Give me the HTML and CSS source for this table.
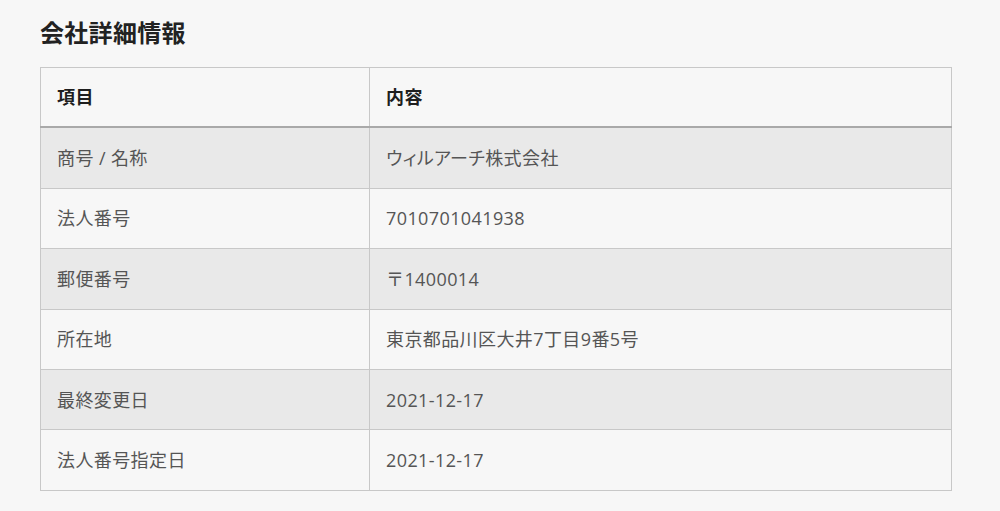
FILE: index.html
```html
<!DOCTYPE html>
<html lang="ja">
<head>
<meta charset="utf-8">
<link rel="stylesheet" href="styles.css">
</head>
<body>
<main class="page">
  <h2 class="title">会社詳細情報</h2>
  <table class="info">
    <thead>
      <tr><th class="col-key">項目</th><th>内容</th></tr>
    </thead>
    <tbody>
      <tr><td>商号 / 名称</td><td class="prop">ウィルアーチ株式会社</td></tr>
      <tr><td>法人番号</td><td>7010701041938</td></tr>
      <tr><td>郵便番号</td><td>〒1400014</td></tr>
      <tr><td>所在地</td><td>東京都品川区大井7丁目9番5号</td></tr>
      <tr><td>最終変更日</td><td>2021-12-17</td></tr>
      <tr><td>法人番号指定日</td><td>2021-12-17</td></tr>
    </tbody>
  </table>
</main>
</body>
</html>
```
FILE: styles.css
```css
html, body {
  margin: 0;
  padding: 0;
  background: #f7f7f7;
}
body {
  font-family: "Open Sans", "Noto Sans CJK JP", sans-serif;
  color: #333;
}
.page {
  padding: 15px 48px 0 40px;
}
.title {
  margin: 0 0 18px;
  font-family: "Noto Sans CJK JP", sans-serif;
  font-size: 24px;
  font-weight: 700;
  line-height: 34px;
  letter-spacing: 0.3px;
  color: #222;
}
.info {
  width: 912px;
  border-collapse: collapse;
  border: 1px solid #c4c4c4;
  font-size: 18px;
  letter-spacing: 0.4px;
}
.info th, .info td {
  text-align: left;
  padding: 0 16px;
  height: 59.4px;
  border: 1px solid #c8c8c8;
  line-height: 24px;
}
.info th {
  font-weight: 700;
  color: #1e1e1e;
  background: #f7f7f7;
  height: 58.4px;
  border-bottom: 2px solid #a9a9a9;
}
.info .col-key {
  width: 296px;
}
.info td {
  color: #555;
  font-weight: 400;
}
.info .prop {
  font-feature-settings: "palt";
}
.info tbody tr:nth-child(odd) td {
  background: #e9e9e9;
}
.info tbody tr:nth-child(even) td {
  background: #f7f7f7;
}
```
